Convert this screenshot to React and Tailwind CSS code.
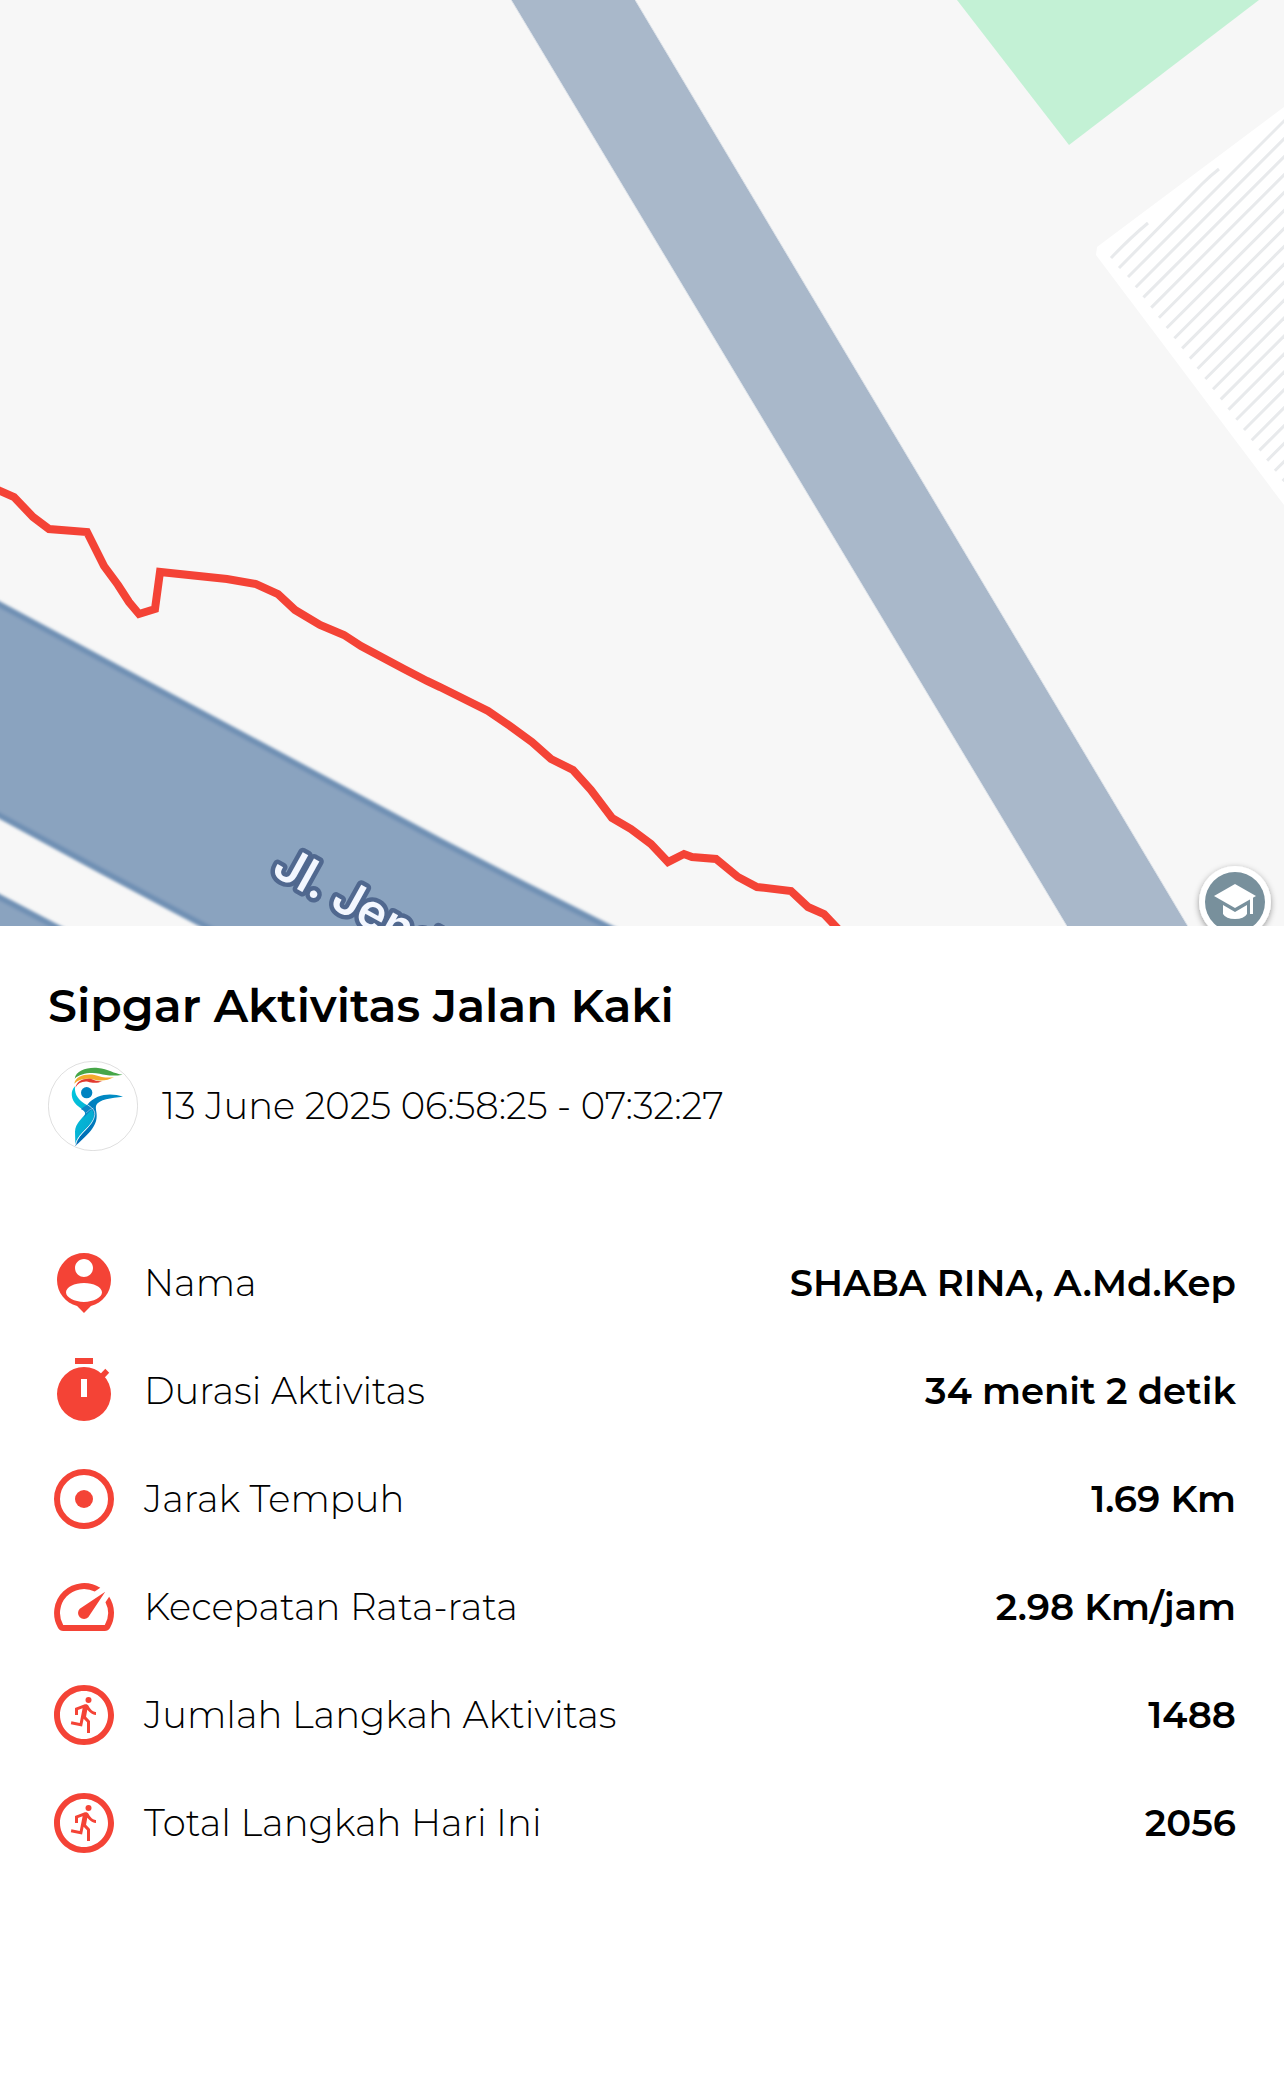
import { MdSpeed, MdOutlineRunCircle } from 'react-icons/md';

const route =
  '-6,488 0,491 14,497 33,517 49,529 87,532 104,566 118,585 129,602 139,614 155,609 160,572 227,579 256,584 278,594 295,610 320,625 344,635 361,646 404,669 427,681 440,687 488,711 510,726 532,742 551,759 573,770 591,790 612,818 631,829 651,844 668,862 684,854 692,857 716,859 738,877 757,887 791,891 808,907 824,914 840,931';

const hatch = Array.from({ length: 21 }, (_, i) => ({
  x: 1128 + i * 7.73,
  y: 277 + i * 10.2,
}));

function RouteMap() {
  return (
    <svg className="block w-full bg-[#f7f7f7]" viewBox="0 0 1284 926" role="img" aria-label="Peta rute">
      <defs>
        <filter id="soft" x="-5%" y="-5%" width="110%" height="110%">
          <feGaussianBlur stdDeviation="1.5" />
        </filter>
        <filter id="markerShadow" x="-30%" y="-30%" width="160%" height="160%">
          <feDropShadow dx="0" dy="2" stdDeviation="3" floodOpacity="0.4" />
        </filter>
      </defs>

      {/* Park */}
      <path d="M957 0L1069 145L1259 0z" fill="#c3f1d5" />

      {/* Building */}
      <path d="M1096 255L1097 247L1284 107V505z" fill="#fff" />
      <g stroke="#e8eaec" strokeWidth="3" fill="none">
        <path d="M1111 258Q1130 238 1148 223" />
        <path d="M1119 268L1202 184Q1210 176 1219 169" />
        {hatch.map((line) => (
          <path key={line.x} d={`M${line.x} ${line.y}L1290 ${line.y - (1290 - line.x)}`} />
        ))}
      </g>

      {/* Side road */}
      <path d="M510 -2H634L1189 928H1068z" fill="#a9b8ca" stroke="#dfe4ea" strokeWidth="1" />

      {/* Main roads */}
      <g stroke="#7090b4" strokeWidth="6" filter="url(#soft)">
        <path d="M-20 594L440 841L525 885L640 943H237L100 870L-20 805z" fill="#8aa3bf" />
        <path d="M-20 887L100 950H-20z" fill="#8aa3bf" />
      </g>

      <text
        transform="translate(270 874) rotate(29)"
        className="font-['Inter',sans-serif] text-[48px] font-semibold"
        fill="#f3f7ff"
        stroke="#50688f"
        strokeWidth="9"
        strokeLinejoin="round"
        paintOrder="stroke"
      >
        Jl. Jend.
      </text>

      <polyline points={route} fill="none" stroke="#f44336" strokeWidth="8" />

      {/* School marker */}
      <g fill="#fff">
        <circle cx="1235" cy="902" r="36" filter="url(#markerShadow)" />
        <circle cx="1235" cy="902" r="30" fill="#78909c" />
        <path d="M1235 884L1256 896L1235 908L1214 896z" />
        <path d="M1223 905L1235 912L1247 905V914Q1244 919 1235 919Q1226 919 1223 914z" />
        <path d="M1250 898L1253 896V914H1250z" />
      </g>
    </svg>
  );
}

function Logo() {
  return (
    <svg className="size-[90px] shrink-0" viewBox="0 0 270 270" aria-hidden="true">
      <defs>
        <linearGradient id="cyan" x1="0" y1="0" x2="1" y2="1">
          <stop offset="0" stopColor="#00c8de" />
          <stop offset="1" stopColor="#0aa0cc" />
        </linearGradient>
        <linearGradient id="blue" x1="0" y1="1" x2="1" y2="0">
          <stop offset="0" stopColor="#0069b4" />
          <stop offset="1" stopColor="#0090c6" />
        </linearGradient>
      </defs>
      <circle cx="135" cy="135" r="134" fill="#fff" stroke="#9e9e9e" strokeWidth="1" />
      <path d="M80 53C84 28 118 18 150 21C180 24 198 38 224 41C195 46 175 43 155 38C125 33 95 38 80 53z" fill="#46a648" />
      <path d="M79 68C82 46 112 37 140 42C162 49 180 52 198 48C180 58 160 62 140 56C115 50 92 54 79 68z" fill="#f4ab2c" />
      <path d="M82 80C86 60 108 50 130 54C145 60 152 62 164 60C148 68 132 66 120 62C102 60 90 66 82 80z" fill="#e23a2e" />
      <circle cx="116" cy="95" r="17" fill="#0083c1" />
      <path d="M81 76C66 90 69 116 86 132C98 143 114 148 112 158C102 174 82 186 81 212L82 250C92 212 140 194 143 154C136 140 112 132 98 119C84 106 80 94 81 76z" fill="url(#cyan)" />
      <path d="M225 107C190 110 152 116 145 132C141 142 147 154 146 166C146 202 108 230 82 256C84 226 122 206 136 176C142 158 134 142 118 131C146 97 190 96 225 107z" fill="url(#blue)" />
      <path d="M98 144C116 152 114 162 104 174C110 168 124 152 134 144L118 131z" fill="#0a86c4" />
      <path d="M118 131C138 143 146 154 136 176C122 206 90 216 83 252" fill="none" stroke="#fff" strokeWidth="2" />
      <path d="M114 156Q126 144 137 141" fill="none" stroke="#fff" strokeWidth="1" />
    </svg>
  );
}

function PersonIcon() {
  return (
    <svg viewBox="0 0 24 24" fill="currentColor" className="size-full">
      <path
        fillRule="evenodd"
        d="M12 2c-4.97 0-9 4.03-9 9 0 4.17 2.84 7.67 6.69 8.69L12 22l2.31-2.31C18.16 18.67 21 15.17 21 11c0-4.97-4.03-9-9-9zm0 2c1.66 0 3 1.34 3 3s-1.34 3-3 3-3-1.34-3-3 1.34-3 3-3zm0 14.3c-3.2 0-6-1.5-6-3.2S8.8 12 12 12s6 1.4 6 3.1-2.8 3.2-6 3.2z"
      />
    </svg>
  );
}

function TimerIcon() {
  return (
    <svg viewBox="0 0 24 24" fill="currentColor" className="size-full">
      <path d="M9 1h6v2H9z" />
      <path d="M17.2 6.6L19.1 4.6L20.4 5.9L18.5 7.9z" />
      <path fillRule="evenodd" d="M12 4a9 9 0 1 0 0 18a9 9 0 0 0 0-18zM11 8h2v6h-2z" />
    </svg>
  );
}

function TargetIcon() {
  return (
    <svg viewBox="0 0 24 24" fill="none" className="size-full">
      <circle cx="12" cy="12" r="9" stroke="currentColor" strokeWidth="2" />
      <circle cx="12" cy="12" r="3" fill="currentColor" />
    </svg>
  );
}

const stats = [
  { label: 'Nama', value: 'SHABA RINA, A.Md.Kep', Icon: PersonIcon },
  { label: 'Durasi Aktivitas', value: '34 menit 2 detik', Icon: TimerIcon },
  { label: 'Jarak Tempuh', value: '1.69 Km', Icon: TargetIcon },
  { label: 'Kecepatan Rata-rata', value: '2.98 Km/jam', Icon: MdSpeed },
  { label: 'Jumlah Langkah Aktivitas', value: '1488', Icon: MdOutlineRunCircle },
  { label: 'Total Langkah Hari Ini', value: '2056', Icon: MdOutlineRunCircle },
];

export default function App() {
  return (
    <div className="min-h-screen bg-white font-['Montserrat','Inter',sans-serif] text-black">
      <RouteMap />

      <main className="px-12 pt-12 pb-24">
        {/* Activity header */}
        <h1 className="text-[46px] leading-[64px] font-semibold">Sipgar Aktivitas Jalan Kaki</h1>
        <div className="mt-[23px] flex items-center gap-6">
          <Logo />
          <p className="text-[37px] leading-[48px] font-light">13 June 2025 06:58:25 - 07:32:27</p>
        </div>

        {/* Stats */}
        <dl className="mt-24 flex flex-col gap-9">
          {stats.map(({ label, value, Icon }) => (
            <div key={label} className="flex items-center justify-between gap-6">
              <dt className="flex items-center gap-6 text-[37px] leading-[48px] font-light">
                <span className="size-[72px] shrink-0 text-[#f44336]">
                  <Icon className="size-full" />
                </span>
                {label}
              </dt>
              <dd className="text-right text-[37px] leading-[48px] font-semibold">{value}</dd>
            </div>
          ))}
        </dl>
      </main>
    </div>
  );
}
